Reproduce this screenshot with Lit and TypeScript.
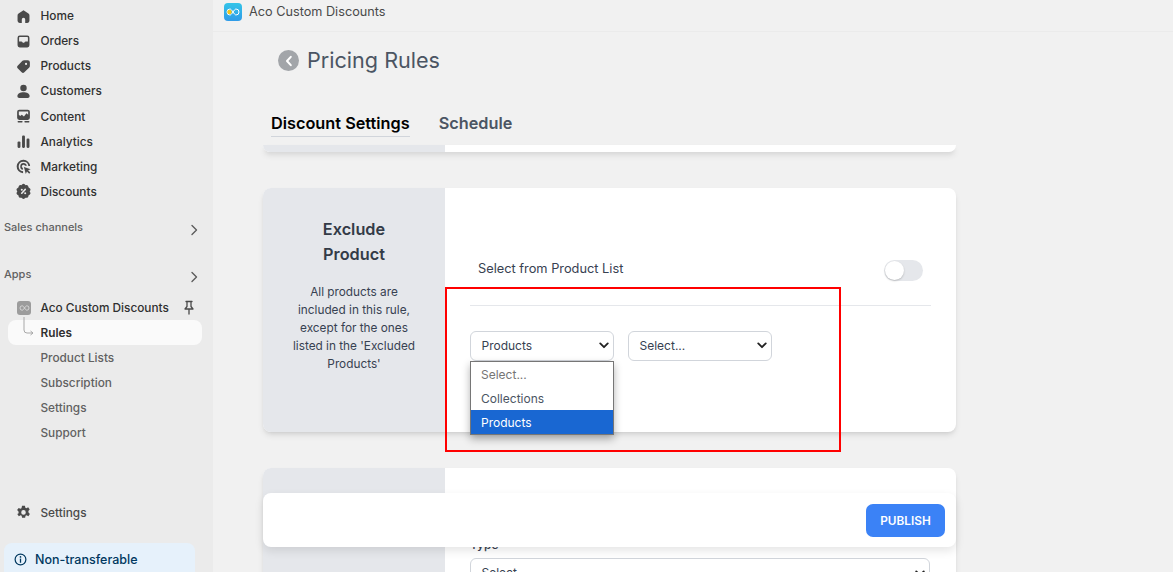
import { LitElement, html, css, svg } from "lit";
import { customElement } from "lit/decorators.js";

const icons: Record<string, any> = {
  home: svg`<path d="M10 2.500 4.200 6.600A2.800 2.800 0 0 0 3 8.900V15a2.500 2.500 0 0 0 2.500 2.500H8v-4a2 2 0 0 1 4 0v4h2.500A2.500 2.500 0 0 0 17 15V8.900a2.800 2.800 0 0 0-1.200-2.300L10 2.500Z"/>`,
  orders: svg`<path fill-rule="evenodd" d="M5.500 3A2.500 2.500 0 0 0 3 5.500v9A2.500 2.500 0 0 0 5.500 17h9a2.500 2.500 0 0 0 2.500-2.500v-9A2.500 2.500 0 0 0 14.500 3h-9ZM4.800 5.500c0-.4.300-.7.700-.7h9c.4 0 .7.300.7.700V10h-2.700c-.6 0-1 .3-1.300.8l-.4.800H9.200l-.4-.8c-.3-.5-.7-.8-1.300-.8H4.800V5.500Z"/>`,
  products: svg`<path fill-rule="evenodd" d="M10.600 2.500H15A2.500 2.500 0 0 1 17.500 5v4.400c0 .7-.3 1.300-.7 1.800l-5.800 5.700a2.300 2.300 0 0 1-3.200 0l-4.700-4.700a2.300 2.300 0 0 1 0-3.200l5.700-5.800c.5-.4 1.100-.7 1.800-.7ZM13 5.700a1.300 1.300 0 1 0 0 2.600 1.300 1.300 0 0 0 0-2.600Z"/>`,
  customers: svg`<circle cx="10" cy="5.800" r="3.800"/><path d="M2.800 15.300C2.800 12.300 6 10.800 10 10.800s7.200 1.500 7.200 4.500c0 1.400-.9 2.200-2.200 2.200H5c-1.300 0-2.200-.8-2.200-2.200Z"/>`,
  content: svg`<path fill-rule="evenodd" d="M5 2A2.500 2.500 0 0 0 2.500 4.500v7A2.500 2.500 0 0 0 5 14h10a2.500 2.500 0 0 0 2.500-2.500v-7A2.500 2.500 0 0 0 15 2H5ZM4.500 4.200h11v3.800l-2-1.800-3 3.800-2.500-2-2 1.300-1.500-1.300V4.200Z"/><rect x="3" y="15.300" width="6" height="1.700" rx=".85"/><rect x="11" y="15.300" width="6" height="1.700" rx=".85"/>`,
  analytics: svg`<rect x="3" y="10" width="3.400" height="7.500" rx="1.300"/><rect x="8.300" y="3" width="3.400" height="14.500" rx="1.300"/><rect x="13.600" y="6.500" width="3.400" height="11" rx="1.300"/>`,
  marketing: svg`<path d="M10 2.200a7.800 7.800 0 0 1 7.800 7.300h-2.100A5.700 5.700 0 1 0 9.500 15.700v2.100A7.800 7.800 0 0 1 10 2.200Z"/><path d="M10 6a4 4 0 0 1 3.900 3.200h-2.200A1.900 1.900 0 1 0 9.300 11.700v2.200A4 4 0 0 1 10 6Z"/><path d="m10.500 10.500 8 2.600-3.100 1.400 2.600 2.600-1.300 1.300-2.600-2.600-1.400 3.100-2.200-8.400Z"/>`,
  discounts: svg`<path fill-rule="evenodd" d="M8.300 1.800a2.300 2.300 0 0 1 3.400 0l.7.700 1-.1a2.300 2.300 0 0 1 2.400 1.900l.2 1 .9.500a2.300 2.300 0 0 1 .9 3.200l-.5.900.5.900a2.300 2.300 0 0 1-.9 3.200l-.9.500-.2 1a2.300 2.300 0 0 1-2.400 1.900l-1-.1-.7.700a2.300 2.300 0 0 1-3.400 0l-.7-.7-1 .1a2.300 2.300 0 0 1-2.400-1.900l-.2-1-.9-.5a2.300 2.300 0 0 1-.9-3.200l.5-.9-.5-.9a2.300 2.300 0 0 1 .9-3.200l.9-.5.2-1a2.300 2.300 0 0 1 2.400-1.900l1 .1.700-.7ZM12.700 6.800a.9.900 0 0 0-1.300 0L7.300 11.400a.9.900 0 0 0 1.300 1.300l4.100-4.600a.9.900 0 0 0 0-1.300ZM8 6.700a1.200 1.200 0 1 0 0 2.400 1.200 1.200 0 0 0 0-2.400Zm4 4.200a1.200 1.200 0 1 0 0 2.400 1.200 1.200 0 0 0 0-2.400Z"/>`,
  settings: svg`<path fill-rule="evenodd" d="M8.300 2h3.400l.5 2.300 1.200.6 2.100-1.100 1.800 2.600-1.600 1.700.2 1.900 1.600 1.700-1.800 2.600-2.100-1.100-1.200.7-.5 2.300H8.300l-.5-2.300-1.200-.7-2.100 1.100-1.800-2.600L4.300 10.800l-.2-1.900-1.600-1.700 1.800-2.600 2.100 1.100 1.200-.6L8.300 2ZM10 7.200a2.700 2.700 0 1 0 0 5.400 2.700 2.700 0 0 0 0-5.400Z"/>`,
};

const nav = [
  ["home", "Home"], ["orders", "Orders"], ["products", "Products"], ["customers", "Customers"],
  ["content", "Content"], ["analytics", "Analytics"], ["marketing", "Marketing"], ["discounts", "Discounts"],
];
const sub = ["Product Lists", "Subscription", "Settings", "Support"];

const chevron = html`<svg class="chev" viewBox="0 0 10 12" width="10" height="12"><path d="m3 1.500 4.500 4.500L3 10.500" fill="none" stroke="#5c5c5c" stroke-width="1.400" stroke-linecap="round" stroke-linejoin="round"/></svg>`;
const caret = html`<svg class="caret" viewBox="0 0 12 8" width="10" height="7"><path d="m1.500 1.500 4.500 4.500 4.500-4.500" fill="none" stroke="#222" stroke-width="2.200" stroke-linecap="round" stroke-linejoin="round"/></svg>`;

@customElement("app-root")
export class AppRoot extends LitElement {
  static styles = css`
    :host { display: block; width: 1173px; height: 572px; overflow: hidden; position: relative; background: #f1f1f1; font-family: Inter, "Liberation Sans", sans-serif; color: #303030; }
    .shell { display: flex; height: 572px; }
    aside { width: 213px; flex: none; background: #ebebeb; height: 572px; display: flex; flex-direction: column; padding: 3.5px 0 0; box-sizing: border-box; position: relative; overflow: hidden; }
    .item { height: 25.14px; display: flex; align-items: center; padding-left: 14.5px; gap: 9px; font-size: 11.8px; font-weight: 500; color: #303030; flex: none; }
    .item svg { width: 17px; height: 17px; fill: #4a4a4a; flex: none; }
    .group { display: flex; align-items: center; justify-content: space-between; padding: 0 14px 0 4px; font-size: 11px; font-weight: 500; color: #616161; height: 20px; }
    .group.first { margin-top: 12.5px; }
    .group.second { margin-top: 27px; }
    .chev { margin-top: 6px; }
    .group.second .chev { margin-top: 5px; }
    .app { height: 25px; margin-top: 11px; display: flex; align-items: center; padding: 0 17px; font-size: 11.8px; font-weight: 500; color: #303030; }
    .app-logo { width: 14px; height: 14px; border-radius: 3px; background: #9c9c9c; margin-right: 9.5px; display: flex; align-items: center; justify-content: center; flex: none; }
    .app span { flex: 1; }
    .pin { width: 14px; height: 15px; }
    .rules { margin: 0 11px 0 8px; height: 25px; border-radius: 8px; background: #fafafa; display: flex; align-items: center; padding-left: 32.5px; font-size: 11.8px; font-weight: 600; color: #303030; position: relative; }
    .elbow { position: absolute; left: 15px; top: -4px; }
    .sub { height: 25.1px; display: flex; align-items: center; padding-left: 40.5px; font-size: 11.8px; font-weight: 500; color: #616161; flex: none; }
    .sub.first { margin-top: 0.5px; }
    .spacer { flex: 1; }
    .item.bottom { color: #4a4a4a; margin-bottom: 18px; height: 25px; }
    .item.bottom svg { margin-left: .5px; margin-right: -.5px; }
    .notice { margin-left: 4px; width: 191px; height: 29px; flex: none; background: #e6f1fb; border-radius: 8px 8px 0 0; display: flex; align-items: center; padding: 4px 0 0 10px; gap: 8px; box-sizing: border-box; color: #00385f; font-size: 12.5px; font-weight: 500; }
    main { flex: 1; min-width: 0; display: flex; flex-direction: column; height: 572px; overflow: hidden; }
    .topbar { height: 32px; flex: none; box-sizing: border-box; border-bottom: 1px solid #ebebeb; display: flex; align-items: center; padding: 0 0 8px 11px; gap: 7px; font-size: 12.7px; color: #4a4a4a; }
    .logo { width: 18px; height: 18px; border-radius: 4px; background: linear-gradient(180deg, #33c4e8, #2f9be8); display: flex; align-items: center; justify-content: center; flex: none; }
    .title { display: flex; align-items: center; margin: 14px 0 0 65px; gap: 8px; font-size: 21.6px; line-height: 29px; color: #4b5563; }
    .back { width: 21px; height: 21px; border-radius: 50%; background: #a2a5a9; display: flex; align-items: center; justify-content: center; flex: none; }
    .tabs { display: flex; margin: 38px 0 0 58px; gap: 29px; font-size: 16.3px; font-weight: 600; line-height: 20px; }
    .tab { padding-bottom: 3px; color: #4b5563; }
    .tab.on { color: #000; border-bottom: 1px solid #d1d5db; }
    .card { width: 693px; margin-left: 50px; display: flex; background: #fff; border-radius: 8px; box-shadow: 0 4px 6px -1px rgba(0,0,0,.1), 0 2px 4px -2px rgba(0,0,0,.1); flex: none; }
    .side { width: 182px; flex: none; background: #e5e7eb; border-radius: 8px 0 0 8px; box-sizing: border-box; }
    .tail { height: 7px; margin-top: 8px; border-radius: 0 0 8px 8px; }
    .tail .side { border-radius: 0 0 0 8px; }
    .exclude { height: 244px; margin-top: 36px; }
    .exclude .side { padding: 29px 21px 0; text-align: center; }
    .exclude h3 { margin: 0; padding: 0 20px; font-size: 16.3px; line-height: 25px; font-weight: 600; color: #333b47; }
    .exclude p { margin: 16px 0 0; padding: 0 4px; font-size: 11.8px; line-height: 18px; color: #374151; }
    .body { flex: 1; padding: 0 25px; position: relative; }
    .row { display: flex; justify-content: space-between; align-items: center; padding: 71px 8px 0; height: 18px; font-size: 12.8px; font-weight: 400; color: #374151; }
    .toggle { width: 39px; height: 21px; border-radius: 11px; background: #e5e7eb; position: relative; margin: 5px 0 0 0; }
    .knob { position: absolute; left: 1px; top: 1px; width: 19px; height: 19px; border-radius: 50%; background: #fff; box-shadow: 0 1px 2px rgba(0,0,0,.2); }
    hr { border: 0; border-top: 1px solid #e5e7eb; margin: 28px 0 0; }
    .selects { display: flex; gap: 14px; margin-top: 25px; }
    .select { box-sizing: border-box; height: 30px; width: 144px; border: 1px solid #d1d5db; border-radius: 6px; background: #fff; display: flex; align-items: center; justify-content: space-between; padding: 0 4.5px 1px 10.5px; font-size: 12px; color: #374151; }
    .menu { position: absolute; left: 25px; top: 173px; width: 144px; box-sizing: border-box; border: 1px solid #767676; background: #fff; box-shadow: 0 4px 8px rgba(0,0,0,.3); font-size: 12px; color: #4b5563; z-index: 3; height: 74px; display: flex; flex-direction: column; }
    .opt { height: 24px; line-height: 26px; padding-left: 10px; flex: none; }
    .opt.dim { color: #757575; }
    .opt.sel { background: #1967d2; color: #fff; }
    .third { height: 200px; margin-top: 36px; }
    .third .body { padding-top: 69px; }
    .type { font-size: 12px; line-height: 15px; font-weight: 500; color: #374151; }
    .wide { box-sizing: border-box; margin-top: 6px; height: 30px; width: 460px; border: 1px solid #d1d5db; border-radius: 6px; display: flex; align-items: center; justify-content: space-between; padding: 0 4.5px 0 10.5px; font-size: 12px; line-height: 14px; color: #374151; }
    .redbox { position: absolute; left: 445px; top: 287px; width: 396px; height: 165px; box-sizing: border-box; border: 2px solid #f00; z-index: 5; pointer-events: none; }
    .bar { position: absolute; left: 263px; top: 493px; width: 693px; height: 54px; background: #fff; border-radius: 8px; box-shadow: 0 4px 10px rgba(0,0,0,.1); display: flex; align-items: center; justify-content: flex-end; padding: 0 11px 0 0; box-sizing: border-box; z-index: 4; }
    .publish { width: 79px; height: 33px; margin-top: 1px; border: 0; border-radius: 7px; background: #3b82f6; color: #fff; font: 600 11.8px Inter, "Liberation Sans", sans-serif; padding: 0; }
  `;

  render() {
    return html`
      <div class="shell">
        <aside>
          ${nav.map(([i, t]) => html`<div class="item"><svg viewBox="0 0 20 20">${icons[i]}</svg>${t}</div>`)}
          <div class="group first">Sales channels ${chevron}</div>
          <div class="group second">Apps ${chevron}</div>
          <div class="app">
            <div class="app-logo"><svg viewBox="0 0 14 8" width="11" height="6"><path d="M4 1a3 3 0 1 0 0 6c2 0 4-6 6-6a3 3 0 1 1 0 6C8 7 6 1 4 1Z" fill="none" stroke="#e4e4e4" stroke-width="1"/></svg></div>
            <span>Aco Custom Discounts</span>
            <svg class="pin" viewBox="0 0 14 15"><path d="M4 1.500h6M5 1.500v5L3 9h8L9 6.500v-5M7 9v5" fill="none" stroke="#4a4a4a" stroke-width="1.300" stroke-linecap="round" stroke-linejoin="round"/></svg>
          </div>
          <div class="rules">
            <svg class="elbow" width="14" height="24" viewBox="0 0 14 24"><path d="M1 1v13a3 3 0 0 0 3 3h6m-2.500-2 2.500 2-2.500 2" fill="none" stroke="#a8a8a8" stroke-width="1"/></svg>
            Rules
          </div>
          ${sub.map((s, i) => html`<div class="sub ${i === 0 ? "first" : ""}">${s}</div>`)}
          <div class="spacer"></div>
          <div class="item bottom"><svg viewBox="0 0 20 20">${icons.settings}</svg>Settings</div>
          <div class="notice">
            <svg width="13" height="13" viewBox="0 0 14 14"><circle cx="7" cy="7" r="5.800" fill="none" stroke="#00385f" stroke-width="1.300"/><rect x="6.300" y="6" width="1.400" height="4.500" fill="#00385f"/><circle cx="7" cy="4.200" r=".9" fill="#00385f"/></svg>
            Non-transferable
          </div>
        </aside>
        <main>
          <div class="topbar">
            <div class="logo"><svg width="14" height="8" viewBox="0 0 14 8"><path d="M4 1a3 3 0 1 0 0 6c2 0 4-6 6-6a3 3 0 1 1 0 6C8 7 6 1 4 1Z" fill="none" stroke="#fff" stroke-width="1"/><circle cx="3.500" cy="4" r="2.200" fill="#f5c518"/></svg></div>
            Aco Custom Discounts
          </div>
          <div class="title">
            <div class="back"><svg width="10" height="12" viewBox="0 0 10 12"><path d="M6.800 1.800 3 6l3.800 4.200" fill="none" stroke="#fff" stroke-width="2" stroke-linecap="round" stroke-linejoin="round"/></svg></div>
            Pricing Rules
          </div>
          <div class="tabs"><div class="tab on">Discount Settings</div><div class="tab">Schedule</div></div>
          <div class="card tail"><div class="side"></div></div>
          <div class="card exclude">
            <div class="side">
              <h3>Exclude Product</h3>
              <p>All products are included in this rule, except for the ones listed in the 'Excluded Products'</p>
            </div>
            <div class="body">
              <div class="row">Select from Product List<div class="toggle"><div class="knob"></div></div></div>
              <hr />
              <div class="selects">
                <div class="select">Products ${caret}</div>
                <div class="select">Select... ${caret}</div>
              </div>
              <div class="menu">
                <div class="opt dim">Select...</div>
                <div class="opt">Collections</div>
                <div class="opt sel">Products</div>
              </div>
            </div>
          </div>
          <div class="card third">
            <div class="side"></div>
            <div class="body">
              <div class="type">Type</div>
              <div class="wide">Select... ${caret}</div>
            </div>
          </div>
        </main>
      </div>
      <div class="redbox"></div>
      <div class="bar"><button class="publish">PUBLISH</button></div>
    `;
  }
}
